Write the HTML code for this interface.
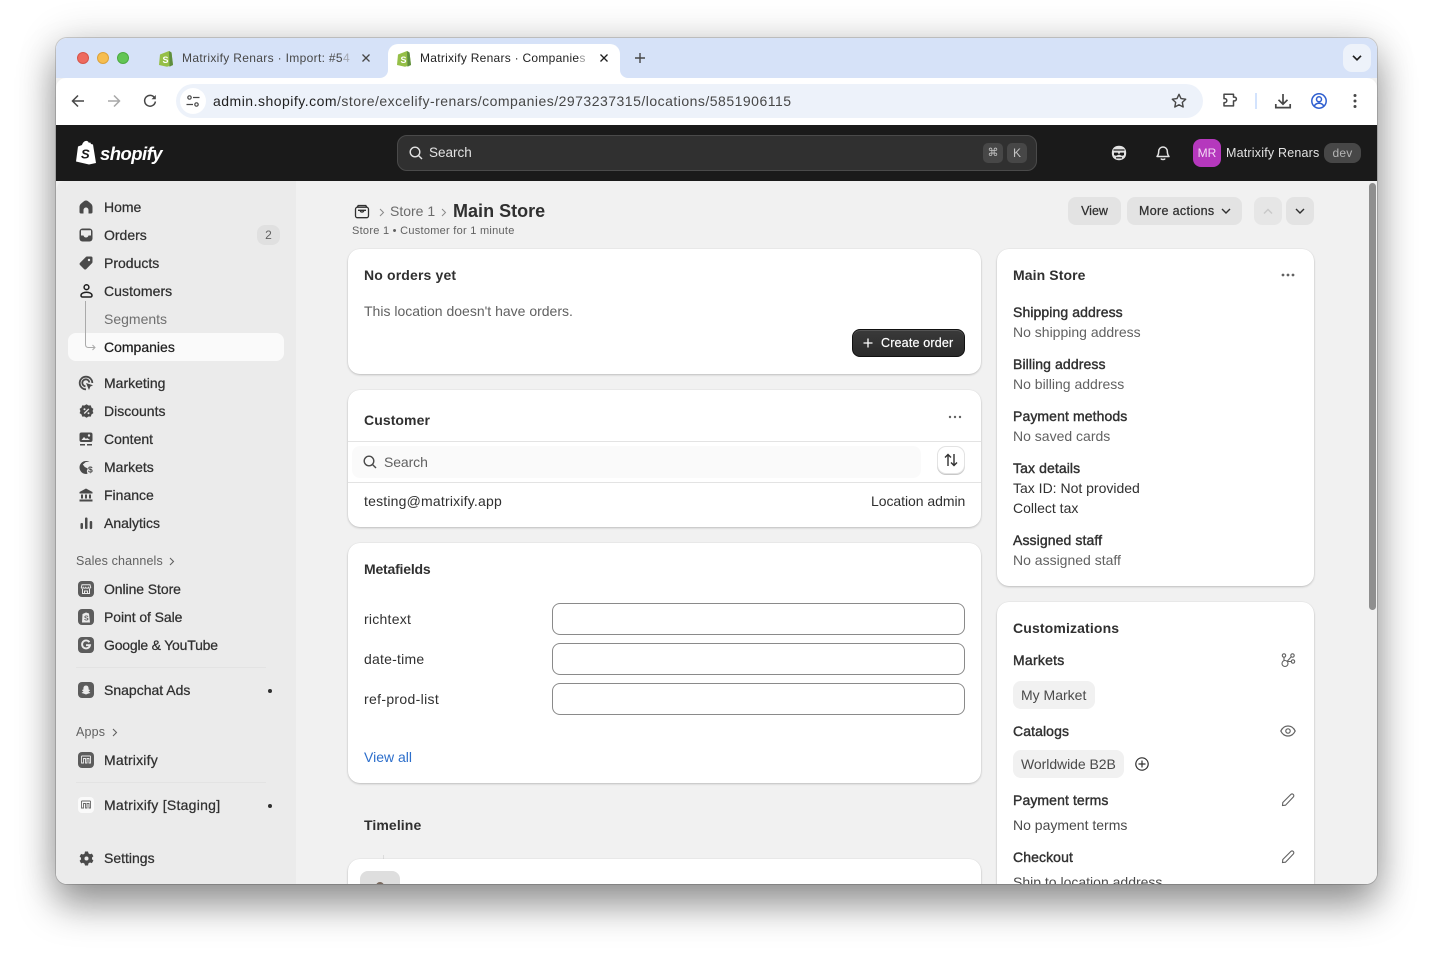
<!DOCTYPE html>
<html><head><meta charset="utf-8"><style>
*{box-sizing:border-box;margin:0;padding:0}
html,body{width:1433px;height:958px;background:#fff;overflow:hidden;font-family:"Liberation Sans",sans-serif;color:#303030}
#win{position:absolute;left:56px;top:38px;width:1321px;height:846px;border-radius:11px;box-shadow:0 0 0 1px rgba(0,0,0,.16),0 22px 38px rgba(0,0,0,.38),0 0 40px rgba(0,0,0,.16)}
#clip{position:absolute;left:0;top:0;width:1433px;height:884px;overflow:hidden;pointer-events:none}
.a{position:absolute}
.t{position:absolute;white-space:nowrap;line-height:20px;font-size:14px;color:#303030}
.b{font-weight:700;-webkit-text-stroke:0}
.s{font-weight:400;-webkit-text-stroke:.4px #303030;letter-spacing:.1px}
.m{font-weight:400;-webkit-text-stroke:.25px}
.g{color:#616161}
.card{position:absolute;background:#fff;border-radius:12px;box-shadow:0 1px 2px rgba(0,0,0,.2),0 0 0 .5px rgba(0,0,0,.04)}
svg{position:absolute;overflow:visible}
.btn{position:absolute;background:#e3e3e3;border-radius:8px;height:28px}
.inp{position:absolute;left:552px;width:413px;height:32px;border:1px solid #8a8a8a;border-radius:8px;background:#fff}
.chip{position:absolute;background:#f1f1f1;border-radius:8px;height:28px}
.hr{position:absolute;height:1px;background:#e3e3e3}
</style></head><body>
<div id="win"></div>
<div id="clip">
<div class="a" style="left:56px;top:38px;width:1321px;height:846px;border-radius:11px;overflow:hidden;background:#f1f1f1">
<div class="a" style="left:0;top:0;width:1321px;height:40px;background:#d6e2f8"></div>
<div class="a" style="left:0;top:40px;width:1321px;height:47px;background:#fff;border-radius:10px 10px 0 0"></div>
<div class="a" style="left:0;top:87px;width:1321px;height:56px;background:#1a1a1a"></div>
<div class="a" style="left:0;top:143px;width:1321px;height:703px;background:#f1f1f1;border-radius:10px 10px 0 0;overflow:hidden"><div class="a" style="left:0;top:0;width:240px;height:703px;background:#ebebeb"></div></div>
<div class="a" style="left:1313px;top:145px;width:7px;height:427px;border-radius:4px;background:#8f8f8f"></div>
</div>

<!-- traffic lights -->
<div class="a" style="left:77px;top:52px;width:12px;height:12px;border-radius:50%;background:#ee6a5f;border:1px solid #d6544a"></div>
<div class="a" style="left:97px;top:52px;width:12px;height:12px;border-radius:50%;background:#f6bd4f;border:1px solid #dca23a"></div>
<div class="a" style="left:117px;top:52px;width:12px;height:12px;border-radius:50%;background:#62c554;border:1px solid #4daa41"></div>

<!-- active tab -->
<div class="a" style="left:388px;top:44px;width:232px;height:34px;background:#fff;border-radius:10px 10px 0 0"></div>
<svg style="left:380px;top:70px" width="8" height="8"><path d="M8 0v8H0a8 8 0 0 0 8-8z" fill="#fff"/></svg>
<svg style="left:620px;top:70px" width="8" height="8"><path d="M0 0v8h8a8 8 0 0 1-8-8z" fill="#fff"/></svg>

<!-- favicons -->
<svg style="left:158px;top:50px" width="16" height="17" viewBox="0 0 16 17"><path d="M2 4.500 11 1l2.500 1.500L15 15l-6 1.800L1 15z" fill="#95bf47"/><path d="M11 1l.5 15.700L15 15 13.500 2.500z" fill="#5e8e3e"/><text x="4.500" y="13" font-size="9" font-weight="700" fill="#fff" font-family="Liberation Sans">S</text></svg>
<svg style="left:396px;top:50px" width="16" height="17" viewBox="0 0 16 17"><path d="M2 4.500 11 1l2.500 1.500L15 15l-6 1.800L1 15z" fill="#95bf47"/><path d="M11 1l.5 15.700L15 15 13.500 2.500z" fill="#5e8e3e"/><text x="4.500" y="13" font-size="9" font-weight="700" fill="#fff" font-family="Liberation Sans">S</text></svg>

<span class="t" style="left:182px;top:48px;font-size:12px;color:#474747;letter-spacing:.33px">Matrixify Renars · Import: #5<span style="color:#a5a9b3">4</span></span>
<span class="t" style="left:420px;top:48px;font-size:12px;color:#1f1f1f;letter-spacing:.27px">Matrixify Renars · Companie<span style="color:#9a9a9a">s</span></span>
<svg style="left:362px;top:54px" width="8" height="8"><path d="M.5.500l7 7M7.500.500l-7 7" stroke="#474747" stroke-width="1.300"/></svg>
<svg style="left:600px;top:54px" width="8" height="8"><path d="M.5.500l7 7M7.500.500l-7 7" stroke="#1f1f1f" stroke-width="1.300"/></svg>
<svg style="left:634px;top:52px" width="12" height="12"><path d="M6 1v10M1 6h10" stroke="#474747" stroke-width="1.400"/></svg>
<div class="a" style="left:1343px;top:44px;width:28px;height:28px;border-radius:9px;background:#edf2fa"></div>
<svg style="left:1352px;top:55px" width="10" height="6"><path d="M1 .8l4 4 4-4" fill="none" stroke="#1f1f1f" stroke-width="1.700"/></svg>

<!-- toolbar -->
<svg style="left:71px;top:94px" width="14" height="14"><path d="M13 7H2M7 1.500 1.500 7 7 12.500" fill="none" stroke="#474747" stroke-width="1.500"/></svg>
<svg style="left:107px;top:94px" width="14" height="14"><path d="M1 7h11M7 1.500 12.500 7 7 12.500" fill="none" stroke="#a8a8a8" stroke-width="1.500"/></svg>
<svg style="left:143px;top:94px" width="14" height="14"><path d="M11.800 4.200A5.400 5.400 0 1 0 12.400 7.500" fill="none" stroke="#474747" stroke-width="1.500"/><path d="M12.800 1v4.300H8.500z" fill="#474747"/></svg>
<div class="a" style="left:176px;top:84px;width:1027px;height:34px;border-radius:17px;background:#edf2fa"></div>
<div class="a" style="left:180px;top:88px;width:26px;height:26px;border-radius:13px;background:#fff"></div>
<svg style="left:186px;top:94px" width="14" height="14" fill="none" stroke="#474747" stroke-width="1.200"><circle cx="3.500" cy="3.500" r="1.700"/><path d="M7 3.500h6.500M.5 10.500H7"/><circle cx="10.500" cy="10.500" r="1.700"/></svg>
<span class="t" style="left:213px;top:91px;font-size:14px;color:#1f1f1f;letter-spacing:.49px">admin.shopify.com<span style="color:#474747">/store/excelify-renars/companies/2973237315/locations/5851906115</span></span>
<svg style="left:1171px;top:93px" width="16" height="15" viewBox="0 0 16 15"><path d="M8 1.300l2 4.300 4.700.6-3.400 3.200.9 4.600L8 11.800 3.800 14l.9-4.600L1.300 6.200 6 5.600z" fill="none" stroke="#474747" stroke-width="1.400" stroke-linejoin="round"/></svg>
<svg style="left:1222px;top:93px" width="15" height="15" viewBox="0 0 15 15"><path d="M1 2.500h9.500V5.300h1a1.900 1.900 0 0 1 0 3.800h-1v5H1v-3.300h.8a2 2 0 0 0 0-4H1z" transform="translate(1 -1.200)" fill="none" stroke="#474747" stroke-width="1.500" stroke-linejoin="round"/></svg>
<div class="a" style="left:1255px;top:93px;width:2px;height:16px;background:#d3e3fd"></div>
<svg style="left:1275px;top:93px" width="16" height="16"><path d="M8 1v10M3.500 6.800 8 11.200l4.500-4.400M.8 11v3.600h14.400V11" fill="none" stroke="#474747" stroke-width="1.700"/></svg>
<svg style="left:1311px;top:93px" width="16" height="16" fill="none" stroke="#2f5fd0" stroke-width="1.500"><circle cx="8" cy="8" r="7.200"/><circle cx="8" cy="6.300" r="2.500"/><path d="M3.300 13c1-2 3-2.800 4.700-2.800s3.700.8 4.700 2.800"/></svg>
<svg style="left:1352px;top:93px" width="6" height="16" fill="#474747"><circle cx="3" cy="2.500" r="1.500"/><circle cx="3" cy="8" r="1.500"/><circle cx="3" cy="13.500" r="1.500"/></svg>

<!-- shopify bar -->
<svg style="left:75px;top:140px" width="22" height="25" viewBox="0 0 22 25"><path d="M1 21.500 3 6.500 7 5C8 2 10 .5 12 1c1 .2 1.500 1 1.800 1.800l1.500-.3L16 4l2 .5L21 23l-7 1.500z" fill="#fff"/><text x="6" y="18.500" font-size="13" font-weight="700" font-style="italic" fill="#1a1a1a" font-family="Liberation Sans">S</text></svg>
<span class="t" style="left:100px;top:144px;font-size:18.500px;font-weight:700;font-style:italic;color:#fff;letter-spacing:-.55px">shopify</span>
<div class="a" style="left:397px;top:135px;width:640px;height:36px;background:#303030;border:1px solid #4a4a4a;border-radius:10px"></div>
<svg style="left:409px;top:146px" width="14" height="14" fill="none" stroke="#e3e3e3" stroke-width="1.400"><circle cx="6" cy="6" r="4.800"/><path d="M9.600 9.600 13 13"/></svg>
<span class="t" style="left:429px;top:143px;color:#e3e3e3;font-size:13.500px">Search</span>
<div class="a" style="left:983px;top:143px;width:20px;height:20px;border-radius:5px;background:#474747"></div>
<span class="t" style="left:983px;top:143px;width:20px;text-align:center;font-size:11px;color:#c4c4c4;font-family:'DejaVu Sans',sans-serif">⌘</span>
<div class="a" style="left:1007px;top:143px;width:20px;height:20px;border-radius:5px;background:#474747"></div>
<span class="t" style="left:1007px;top:143px;width:20px;text-align:center;font-size:12px;color:#c4c4c4">K</span>
<svg style="left:1111px;top:145px" width="16" height="16" viewBox="0 0 16 16"><path d="M8 .8c3.600 0 7.200 2 7.200 7.200S11.600 15.200 8 15.200.8 13.200.8 8 4.400.8 8 .8z" fill="#e3e3e3"/><path d="M2.500 5h11" stroke="#1a1a1a" stroke-width="1.200"/><path d="M3 7.600h3.800l.7 1.300h1l.7-1.300H13v2.400c-1.500 1.200-3 .6-4-.3H7c-1 .9-2.500 1.500-4 .3z" fill="#1a1a1a"/><path d="M5 12.800h6" stroke="#1a1a1a" stroke-width="1.200"/></svg>
<svg style="left:1156px;top:146px" width="14" height="15" viewBox="0 0 14 15" fill="none" stroke="#e3e3e3" stroke-width="1.500"><path d="M7 1a4.300 4.300 0 0 0-4.300 4.300c0 3-.8 4.200-1.700 5.200h12c-.9-1-1.700-2.200-1.700-5.200A4.300 4.300 0 0 0 7 1z" stroke-linejoin="round"/><path d="M5 12.500c.4 1.300 3.600 1.300 4 0"/></svg>
<div class="a" style="left:1193px;top:139px;width:28px;height:28px;border-radius:8px;background:#b538bd"></div>
<span class="t" style="left:1193px;top:143px;width:28px;text-align:center;font-size:12px;color:#f4d9f5">MR</span>
<span class="t" style="left:1226px;top:143px;font-size:12.500px;color:#e3e3e3;letter-spacing:.2px">Matrixify Renars</span>
<div class="a" style="left:1324px;top:143px;width:37px;height:20px;border-radius:8px;background:#474747"></div>
<span class="t" style="left:1324px;top:143px;width:37px;text-align:center;font-size:12px;color:#b5b5b5;letter-spacing:.2px">dev</span>

<!-- sidebar -->
<div class="a" style="left:68px;top:333px;width:216px;height:28px;border-radius:8px;background:#fafafa"></div>
<span class="t m" style="left:104px;top:197px">Home</span>
<span class="t m" style="left:104px;top:225px">Orders</span>
<div class="a" style="left:257px;top:225px;width:23px;height:20px;border-radius:8px;background:#e0e0e0"></div>
<span class="t" style="left:257px;top:225px;width:23px;text-align:center;font-size:12px;color:#616161">2</span>
<span class="t m" style="left:104px;top:253px">Products</span>
<span class="t m" style="left:104px;top:281px;letter-spacing:.06px">Customers</span>
<span class="t g" style="left:104px;top:309px;color:#6f6f6f">Segments</span>
<span class="t m" style="left:104px;top:337px;color:#1f1f1f">Companies</span>
<span class="t m" style="left:104px;top:373px">Marketing</span>
<span class="t m" style="left:104px;top:401px">Discounts</span>
<span class="t m" style="left:104px;top:429px">Content</span>
<span class="t m" style="left:104px;top:457px">Markets</span>
<span class="t m" style="left:104px;top:485px">Finance</span>
<span class="t m" style="left:104px;top:513px">Analytics</span>
<span class="t g" style="left:76px;top:551px;font-size:12.500px;letter-spacing:.15px">Sales channels</span>
<svg style="left:169px;top:557px" width="6" height="9"><path d="M1 1l3.500 3.500L1 8" fill="none" stroke="#616161" stroke-width="1.100"/></svg>
<span class="t m" style="left:104px;top:579px;letter-spacing:-.08px">Online Store</span>
<span class="t m" style="left:104px;top:607px;letter-spacing:-.08px">Point of Sale</span>
<span class="t m" style="left:104px;top:635px;letter-spacing:-.2px">Google &amp; YouTube</span>
<div class="hr" style="left:76px;top:667px;width:190px"></div>
<span class="t m" style="left:104px;top:680px">Snapchat Ads</span>
<div class="a" style="left:268px;top:689px;width:4px;height:4px;border-radius:50%;background:#303030"></div>
<span class="t g" style="left:76px;top:722px;font-size:12.500px;letter-spacing:.15px">Apps</span>
<svg style="left:112px;top:728px" width="6" height="9"><path d="M1 1l3.500 3.500L1 8" fill="none" stroke="#616161" stroke-width="1.100"/></svg>
<span class="t m" style="left:104px;top:750px;letter-spacing:.2px">Matrixify</span>
<div class="hr" style="left:76px;top:782px;width:190px"></div>
<span class="t m" style="left:104px;top:795px;letter-spacing:.27px">Matrixify [Staging]</span>
<div class="a" style="left:268px;top:804px;width:4px;height:4px;border-radius:50%;background:#303030"></div>
<span class="t m" style="left:104px;top:848px">Settings</span>

<!-- sidebar icons -->
<svg style="left:79px;top:200px" width="14" height="14" viewBox="0 0 14 14"><path d="M7 .5C5.500.5 4.500 1.500 2.500 3.300 1 4.600.5 5.500.5 7.500V12a1.500 1.500 0 0 0 1.500 1.500h2.500V10a2.500 2.500 0 0 1 5 0v3.500H12a1.500 1.500 0 0 0 1.500-1.500V7.500c0-2-.5-2.900-2-4.200C9.500 1.500 8.500.5 7 .5z" fill="#4a4a4a"/></svg>
<svg style="left:79px;top:228px" width="14" height="14" viewBox="0 0 14 14"><rect x=".5" y=".5" width="13" height="13" rx="3" fill="#4a4a4a"/><path d="M2 2.200h10V7.500H9.500C9 9 8 9.500 7 9.500S5 9 4.500 7.500H2z" fill="#ebebeb"/></svg>
<svg style="left:79px;top:256px" width="14" height="14" viewBox="0 0 14 14"><path d="M8 .5h4A1.500 1.500 0 0 1 13.500 2v4c0 .6-.3 1-.7 1.400l-5.600 5.700c-.7.600-1.500.6-2.100 0L1 9c-.6-.6-.6-1.500 0-2.100L6.600 1.200C7 .8 7.400.5 8 .5z" fill="#4a4a4a"/><circle cx="10" cy="4" r="1.200" fill="#ebebeb"/></svg>
<svg style="left:80px;top:284px" width="13" height="14" viewBox="0 0 13 14" fill="none" stroke="#1f1f1f" stroke-width="1.500"><circle cx="6.500" cy="3.200" r="2.400"/><path d="M1 11.500c0-2 2.500-3.200 5.500-3.200s5.500 1.200 5.500 3.200c0 1-.8 1.500-1.500 1.500h-8C1.800 13 1 12.500 1 11.500z"/></svg>
<svg style="left:85px;top:301px" width="12" height="52" fill="none" stroke="#aaa" stroke-width="1"><path d="M.5 0v43.500q0 3 3 3H10M7.500 44l2.500 2.500L7.500 49"/></svg>
<svg style="left:79px;top:376px" width="15" height="15" viewBox="0 0 15 15"><path d="M13.300 7A6.300 6.300 0 1 0 7 13.300" fill="none" stroke="#4a4a4a" stroke-width="1.800"/><path d="M10.300 6.500A3.500 3.500 0 1 0 6.500 10.300" fill="none" stroke="#4a4a4a" stroke-width="1.800"/><path d="M7 7l7 2.300-2.700 1.300L10 14z" fill="#4a4a4a"/></svg>
<svg style="left:79px;top:404px" width="15" height="15" viewBox="0 0 15 15"><path d="M7.500.3l2 1.200 2.300-.1.700 2.200 1.900 1.300-.8 2.100.8 2.100-1.900 1.300-.7 2.200-2.300-.1-2 1.200-2-1.200-2.300.1-.7-2.200L.6 9.100l.8-2.100-.8-2.100 1.900-1.300.7-2.200 2.300.1z" fill="#4a4a4a"/><path d="M5.200 9.500l4.600-4.600" stroke="#ebebeb" stroke-width="1.300"/><circle cx="5.500" cy="5.300" r="1" fill="#ebebeb"/><circle cx="9.500" cy="9.200" r="1" fill="#ebebeb"/></svg>
<svg style="left:79px;top:432px" width="14" height="14" viewBox="0 0 14 14"><rect x=".5" y=".5" width="13" height="9.500" rx="2" fill="#4a4a4a"/><path d="M2.500 8l2.500-3 2 2 1-1 3 2z" fill="#ebebeb"/><circle cx="10" cy="3.500" r="1.200" fill="#ebebeb"/><path d="M1 12.800h5M8 12.800h5" stroke="#4a4a4a" stroke-width="1.500"/></svg>
<svg style="left:79px;top:460px" width="15" height="15" viewBox="0 0 15 15"><path d="M10.500 2A6.500 6.500 0 1 0 8.500 13.800L7.800 11l1-2.500-3-1.500-2-2.500 3-2.500z" fill="#4a4a4a"/><text x="9" y="12.500" font-size="8.500" font-weight="700" fill="#4a4a4a" font-family="Liberation Sans">$</text></svg>
<svg style="left:79px;top:488px" width="14" height="14" viewBox="0 0 14 14" fill="#4a4a4a"><path d="M7 .5 13.500 4v1.500H.5V4z"/><path d="M2 6.500h2v4H2zM6 6.500h2v4H6zM10 6.500h2v4h-2zM.5 11.500h13v2H.5z"/></svg>
<svg style="left:80px;top:517px" width="13" height="12" fill="#4a4a4a"><rect x=".5" y="6" width="2.500" height="6" rx="1"/><rect x="5" y=".5" width="2.500" height="11.500" rx="1"/><rect x="9.700" y="4" width="2.500" height="8" rx="1"/></svg>

<div class="a" style="left:78px;top:581px;width:16px;height:16px;border-radius:4px;background:#5c5c5c"></div>
<svg style="left:81px;top:584px" width="10" height="10" fill="none" stroke="#ebebeb" stroke-width="1"><path d="M1 .8h8l.7 2.700c-.5 1-2 1-2.300 0-.5 1-2.200 1-2.700 0-.5 1-2 1-2.500 0-.4 1-1.700 1-1.900 0zM1.500 5v4.500h7V5M3.500 9.500V7h3v2.500"/></svg>
<div class="a" style="left:78px;top:609px;width:16px;height:16px;border-radius:4px;background:#5c5c5c"></div>
<svg style="left:81px;top:611px" width="10" height="12"><path d="M1.500 3 5 1.500 8 2.500l1 9H1z" fill="#ebebeb"/><text x="3" y="9.500" font-size="7" font-weight="700" fill="#5c5c5c" font-family="Liberation Sans">S</text></svg>
<div class="a" style="left:78px;top:637px;width:16px;height:16px;border-radius:4px;background:#5c5c5c"></div>
<svg style="left:81px;top:640px" width="10" height="10" fill="none" stroke="#ebebeb" stroke-width="1.900"><path d="M8.400 2.200A4 4 0 1 0 9 5.200H5"/></svg>
<div class="a" style="left:78px;top:682px;width:16px;height:16px;border-radius:4px;background:#5c5c5c"></div>
<svg style="left:81px;top:685px" width="10" height="10"><path d="M5 .5c1.800 0 2.600 1.400 2.600 3v1l1.400.5c0 .8-1 1-1.500 1.400L9.500 8l-2 .5L5 9.500 2.500 8.500.5 8l2-1.600C2 6 1 5.800 1 5l1.400-.5v-1C2.400 1.900 3.200.5 5 .5z" fill="#ebebeb"/></svg>
<div class="a" style="left:78px;top:752px;width:16px;height:16px;border-radius:4px;background:#5c5c5c"></div>
<svg style="left:81px;top:755px" width="10" height="10" fill="none" stroke="#ebebeb" stroke-width=".9"><path d="M.5 1h9M.5 1v7h2V3.500h2V8h1.500V3.500h2V8h1.500V1"/></svg>
<div class="a" style="left:78px;top:797px;width:16px;height:16px;border-radius:4px;background:#fafafa"></div>
<svg style="left:81px;top:800px" width="10" height="10" fill="none" stroke="#666" stroke-width=".9"><path d="M.5 1h9M.5 1v7h2V3.500h2V8h1.500V3.500h2V8h1.500V1"/></svg>
<svg style="left:79px;top:851px" width="15" height="15" viewBox="0 0 15 15"><path d="M6 .5h3l.5 1.900 1.500.8 1.900-.6 1.500 2.600-1.400 1.300v1.700l1.400 1.300-1.500 2.600-1.900-.6-1.500.8L9 14.500H6l-.5-1.900-1.500-.8-1.900.6L.6 9.800 2 8.500V6.800L.6 5.500l1.500-2.600 1.900.6 1.500-.8z" fill="#4a4a4a"/><circle cx="7.500" cy="7.500" r="2" fill="#ebebeb"/></svg>

<!-- page header -->
<svg style="left:354px;top:204px" width="16" height="15" viewBox="0 0 16 15" fill="none" stroke="#303030" stroke-width="1.300"><path d="M3.200 3.200 4.200 1.500h7.600l1 1.700"/><rect x="1.500" y="3.200" width="13" height="10.500" rx="2"/><path d="M4 6.300h8M6.300 6.300c0 2.400 3.400 2.400 3.400 0"/></svg>
<svg style="left:379px;top:208px" width="6" height="9"><path d="M1 1l3.500 3.500L1 8" fill="none" stroke="#8a8a8a"/></svg>
<span class="t g" style="left:390px;top:201px;color:#6b6b6b">Store 1</span>
<svg style="left:441px;top:208px" width="6" height="9"><path d="M1 1l3.500 3.500L1 8" fill="none" stroke="#8a8a8a"/></svg>
<span class="t b" style="left:453px;top:201px;font-size:18px;letter-spacing:.02px">Main Store</span>
<span class="t g" style="left:352px;top:221px;font-size:11px;letter-spacing:.27px">Store 1 • Customer for 1 minute</span>

<div class="btn" style="left:1068px;top:197px;width:53px"></div>
<span class="t m" style="left:1068px;top:201px;width:53px;text-align:center;font-size:12.500px">View</span>
<div class="btn" style="left:1127px;top:197px;width:115px"></div>
<span class="t m" style="left:1139px;top:201px;font-size:12.500px;letter-spacing:.33px">More actions</span>
<svg style="left:1221px;top:208px" width="10" height="7"><path d="M1 1l4 4 4-4" fill="none" stroke="#303030" stroke-width="1.400"/></svg>
<div class="btn" style="left:1254px;top:197px;width:28px;background:#e6e6e6"></div>
<svg style="left:1263px;top:208px" width="10" height="7"><path d="M1 5.500l4-4 4 4" fill="none" stroke="#c8c8c8" stroke-width="1.400"/></svg>
<div class="btn" style="left:1286px;top:197px;width:28px"></div>
<svg style="left:1295px;top:208px" width="10" height="7"><path d="M1 1l4 4 4-4" fill="none" stroke="#303030" stroke-width="1.400"/></svg>

<!-- cards left -->
<div class="card" style="left:348px;top:249px;width:633px;height:125px"></div>
<span class="t b" style="left:364px;top:265px;font-size:14px;letter-spacing:.15px">No orders yet</span>
<span class="t g" style="left:364px;top:301px">This location doesn't have orders.</span>
<div class="a" style="left:852px;top:329px;width:113px;height:28px;border-radius:8px;background:linear-gradient(#3a3a3a,#2a2a2a);border:1px solid #111;box-shadow:inset 0 1px 0 #555"></div>
<svg style="left:863px;top:338px" width="10" height="10"><path d="M5 .5v9M.5 5h9" stroke="#fff" stroke-width="1.300"/></svg>
<span class="t m" style="left:881px;top:333px;font-size:12.500px;color:#fff;-webkit-text-stroke:.2px #fff;letter-spacing:.18px">Create order</span>

<div class="card" style="left:348px;top:390px;width:633px;height:137px"></div>
<span class="t b" style="left:364px;top:410px;letter-spacing:.08px">Customer</span>
<svg style="left:948px;top:415px" width="14" height="4" fill="#616161"><circle cx="2" cy="2" r="1.200"/><circle cx="7" cy="2" r="1.200"/><circle cx="12" cy="2" r="1.200"/></svg>
<div class="hr" style="left:348px;top:441px;width:633px"></div>
<div class="a" style="left:352px;top:446px;width:569px;height:32px;border-radius:8px;background:#fafafa"></div>
<svg style="left:363px;top:455px" width="14" height="14" fill="none" stroke="#4a4a4a" stroke-width="1.400"><circle cx="6" cy="6" r="4.800"/><path d="M9.600 9.600 13 13"/></svg>
<span class="t g" style="left:384px;top:452px;letter-spacing:-.1px">Search</span>
<div class="a" style="left:938px;top:447px;width:26px;height:26px;border-radius:8px;background:#fff;box-shadow:0 0 0 1px #e3e3e3,0 1px 0 1px #c8c8c8"></div>
<svg style="left:944px;top:453px" width="14" height="14" fill="none" stroke="#303030" stroke-width="1.400"><path d="M4 13V1.500M1 4.500l3-3 3 3M10 1v11.500M7 9.500l3 3 3-3"/></svg>
<div class="hr" style="left:348px;top:482px;width:633px"></div>
<span class="t" style="left:364px;top:491px;letter-spacing:.2px">testing@matrixify.app</span>
<span class="t" style="left:871px;top:491px;letter-spacing:-.05px">Location admin</span>

<div class="card" style="left:348px;top:543px;width:633px;height:240px"></div>
<span class="t b" style="left:364px;top:559px;letter-spacing:-.2px">Metafields</span>
<span class="t" style="left:364px;top:609px;letter-spacing:.25px">richtext</span>
<div class="inp" style="top:603px"></div>
<span class="t" style="left:364px;top:649px;letter-spacing:.22px">date-time</span>
<div class="inp" style="top:643px"></div>
<span class="t" style="left:364px;top:689px;letter-spacing:.33px">ref-prod-list</span>
<div class="inp" style="top:683px"></div>
<span class="t" style="left:364px;top:747px;color:#2c6ecb">View all</span>

<span class="t b" style="left:364px;top:815px;letter-spacing:.1px">Timeline</span>
<div class="a" style="left:383px;top:855px;width:1px;height:5px;background:#dcdcdc"></div>
<div class="card" style="left:348px;top:859px;width:633px;height:60px"></div>
<div class="a" style="left:360px;top:871px;width:40px;height:40px;border-radius:8px;background:#dedede"></div>
<div class="a" style="left:376px;top:882px;width:8px;height:8px;border-radius:50%;background:#7a6a5f"></div>

<!-- right cards -->
<div class="card" style="left:997px;top:249px;width:317px;height:337px"></div>
<span class="t b" style="left:1013px;top:265px;letter-spacing:.1px">Main Store</span>
<svg style="left:1281px;top:273px" width="14" height="4" fill="#616161"><circle cx="2" cy="2" r="1.400"/><circle cx="7" cy="2" r="1.400"/><circle cx="12" cy="2" r="1.400"/></svg>
<span class="t s" style="left:1013px;top:302px">Shipping address</span>
<span class="t g" style="left:1013px;top:322px">No shipping address</span>
<span class="t s" style="left:1013px;top:354px">Billing address</span>
<span class="t g" style="left:1013px;top:374px">No billing address</span>
<span class="t s" style="left:1013px;top:406px">Payment methods</span>
<span class="t g" style="left:1013px;top:426px">No saved cards</span>
<span class="t s" style="left:1013px;top:458px">Tax details</span>
<span class="t" style="left:1013px;top:478px">Tax ID: Not provided</span>
<span class="t" style="left:1013px;top:498px">Collect tax</span>
<span class="t s" style="left:1013px;top:530px">Assigned staff</span>
<span class="t g" style="left:1013px;top:550px">No assigned staff</span>

<div class="card" style="left:997px;top:602px;width:317px;height:320px"></div>
<span class="t b" style="left:1013px;top:618px;letter-spacing:.14px">Customizations</span>
<span class="t s" style="left:1013px;top:650px;letter-spacing:.25px">Markets</span>
<svg style="left:1281px;top:653px" width="15" height="14" fill="none" stroke="#616161" stroke-width="1.100"><circle cx="3" cy="2.500" r="1.700"/><circle cx="11.500" cy="2.500" r="1.700"/><circle cx="12" cy="8.500" r="1.700"/><circle cx="4" cy="10.500" r="3"/><path d="M3 4.200v3.300M10.300 3.700 6 8.500M10.300 8.500H7"/></svg>
<div class="chip" style="left:1013px;top:681px;width:82px"></div>
<span class="t g" style="left:1021px;top:685px;color:#4a4a4a">My Market</span>
<span class="t s" style="left:1013px;top:721px">Catalogs</span>
<svg style="left:1280px;top:724px" width="16" height="14" fill="none" stroke="#616161" stroke-width="1.200"><path d="M.8 7C2.500 3.500 5 2 8 2s5.500 1.500 7.200 5C13.500 10.500 11 12 8 12S2.500 10.500.8 7z"/><circle cx="8" cy="7" r="2.200"/></svg>
<div class="chip" style="left:1013px;top:750px;width:111px"></div>
<span class="t g" style="left:1021px;top:754px;color:#4a4a4a;letter-spacing:-.05px">Worldwide B2B</span>
<svg style="left:1135px;top:757px" width="14" height="14" fill="none" stroke="#303030" stroke-width="1.200"><circle cx="7" cy="7" r="6.200"/><path d="M7 3.500v7M3.500 7h7"/></svg>
<span class="t s" style="left:1013px;top:790px">Payment terms</span>
<svg style="left:1281px;top:793px" width="14" height="14" fill="none" stroke="#616161" stroke-width="1.100"><path d="M1.500 12.500 1.800 9.500 9.800 1.500c.7-.7 1.800-.7 2.500 0s.7 1.800 0 2.500L4.500 12.200z"/></svg>
<span class="t g" style="left:1013px;top:815px;color:#4a4a4a">No payment terms</span>
<span class="t s" style="left:1013px;top:847px">Checkout</span>
<svg style="left:1281px;top:850px" width="14" height="14" fill="none" stroke="#616161" stroke-width="1.100"><path d="M1.500 12.500 1.800 9.500 9.800 1.500c.7-.7 1.800-.7 2.500 0s.7 1.800 0 2.500L4.500 12.200z"/></svg>
<span class="t g" style="left:1013px;top:872px;color:#4a4a4a">Ship to location address</span>
</div>
</body></html>
